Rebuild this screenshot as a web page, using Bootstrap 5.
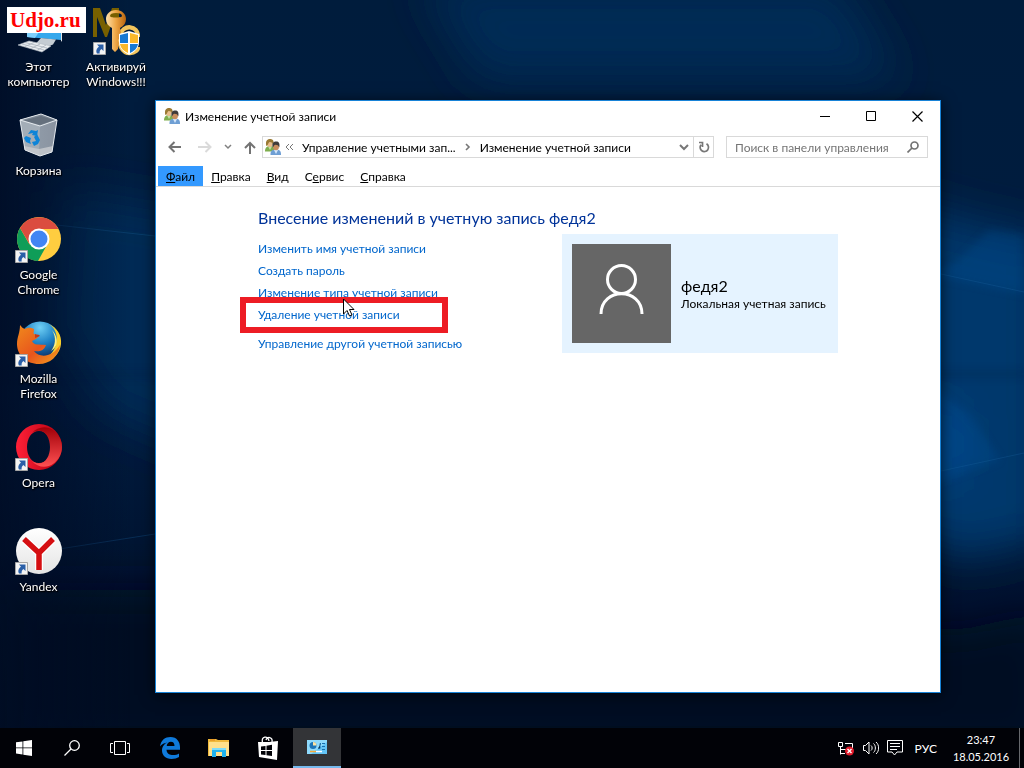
<!DOCTYPE html>
<html lang="ru">
<head>
<meta charset="utf-8">
<meta name="viewport" content="width=device-width, initial-scale=1">
<title>Изменение учетной записи</title>
<link href="https://cdn.jsdelivr.net/npm/bootstrap@5.3.0/dist/css/bootstrap.min.css" rel="stylesheet">
<style>
body{font-family:Lato,"Noto Sans",sans-serif;font-size:12px;line-height:15px;color:#000;background:#00122c}
button{font-size:12px;line-height:15px;padding:0;border:0;background:none;color:inherit}
svg{display:block;flex:none}
.desk{background:#001530}
.wallpaper{position:absolute;inset:0;width:100%;height:100%}
.shortcuts{position:relative;display:grid;grid-template-rows:repeat(6,104px);grid-template-columns:77px 78px;grid-auto-flow:column;width:155px;padding-top:8px}
.shortcuts a{color:#fff;text-decoration:none;text-align:center;text-shadow:0 1px 2px #000,1px 1px 1px #000}
.shortcuts svg{margin:0 auto 3px}
.shortcuts .newcol{grid-column:2;grid-row:1}
.brandmark{position:absolute;left:7px;top:7px;background:#fff;color:#f00;font:bold 21px/26px "Liberation Serif",serif;padding:0 5px 0 3px}
.win{position:absolute;left:155px;top:100px;right:83px;bottom:35px;background:#fff;border:1px solid #1883d7;box-shadow:0 2px 14px #000a}
.titlebar{height:30px;padding-left:8px;gap:5px}
.titlebar button{width:46px;height:30px;display:grid;place-items:center}
.navrow{height:35px;padding:5px 12px 8px 12px}
.navrow>button{height:22px;display:grid;place-items:center}
.box{border:1px solid #d9d9d9;height:22px}
.box a{color:#000;text-decoration:none;white-space:nowrap}
.box .refresh{border-left:1px solid #d9d9d9;width:20px;height:20px;display:grid;place-items:center}
.address{margin-left:6px;padding-left:2px}
.finder{width:202px;margin-left:12px}
.finder input{border:0;outline:0;background:none;width:100%;min-width:0;padding:0 0 0 8px;color:#333}
.finder input::placeholder{color:#757575;opacity:1}
.menus{border-bottom:1px solid #d9d9d9;height:21px;padding-left:2px}
.menus button{padding:0 8px;height:20px}
.menus .on{background:#3399ff}
.pane{padding:21px 102px 0}
.pane h1{font-size:16px;font-weight:400;line-height:20px;color:#003399;margin:0}
.pane li{line-height:16px;margin-bottom:6px;position:relative}
.pane li:last-child{margin-top:13px}
.pane li a{color:#0066cc;text-decoration:none}
.links{width:304px;padding-top:13px}
.ring{position:absolute;left:-18px;top:-10px;width:208px;height:36px;border:6px solid #ed1c24;pointer-events:none}
.pointer{position:absolute;left:84px;top:-9px}
.usercard{width:276px;background:#e5f3ff;padding:10px;margin-top:6px;gap:10px}
.usercard b{font-weight:400;font-size:16px;line-height:20px}
.taskbar{height:40px;background:#010207;color:#fff}
.taskbar button{width:48px;height:40px;display:grid;place-items:center}
.taskbar .apps{gap:1px;margin-left:2px}
.taskbar .active{background:#333437;border-bottom:2px solid #76b9ed}
.tray .clock{width:72px;font-size:11px;line-height:17px;margin-left:8px}
.tray .peek{width:5px;height:40px;border-left:1px solid #66686c;margin-left:2px}
.tray .lang,.tray .ic{width:auto}
</style>
</head>
<body>
<svg width="0" height="0" class="position-absolute" aria-hidden="true">
<defs>
<linearGradient id="op" x1="0" x2="1"><stop offset="0" stop-color="#ff2038"/><stop offset="1" stop-color="#b5000e"/></linearGradient>
<linearGradient id="op2" x1="0" y1="0" x2="0" y2="1"><stop offset="0" stop-color="#a10008"/><stop offset="1" stop-color="#ff5052"/></linearGradient>
<radialGradient id="ffb" cx=".5" cy=".15" r=".8"><stop offset="0" stop-color="#6fd0f5"/><stop offset=".5" stop-color="#1b7fc4"/><stop offset="1" stop-color="#0c2458"/></radialGradient>
<linearGradient id="ffo" x1="0" y1="0" x2="1" y2="1"><stop offset="0" stop-color="#f08a1c"/><stop offset=".55" stop-color="#e8551d"/><stop offset="1" stop-color="#f5a31d"/></linearGradient>
<linearGradient id="ya" x1="0" y1="0" x2="0" y2="1"><stop offset="0" stop-color="#fff"/><stop offset="1" stop-color="#e4e4e4"/></linearGradient>
<linearGradient id="bin" x1="0" x2="1"><stop offset="0" stop-color="#aab3bd"/><stop offset=".5" stop-color="#8f9aa7"/><stop offset="1" stop-color="#8a93a0"/></linearGradient>
<linearGradient id="key" x1="0" x2="1"><stop offset="0" stop-color="#ffe0a8"/><stop offset=".5" stop-color="#eda544"/><stop offset="1" stop-color="#b9640d"/></linearGradient>
<linearGradient id="sky" x1="0" y1="0" x2="0" y2="1"><stop offset="0" stop-color="#001c3c"/><stop offset=".55" stop-color="#001c40"/><stop offset="1" stop-color="#000c22"/></linearGradient>
<linearGradient id="edge" x1="0" x2="1"><stop offset="0" stop-color="#000c24" stop-opacity=".8"/><stop offset="1" stop-color="#000c24" stop-opacity="0"/></linearGradient>
<filter id="soft" x="-50%" y="-50%" width="200%" height="200%"><feGaussianBlur stdDeviation="22"/></filter>
<filter id="haze" x="-50%" y="-50%" width="200%" height="200%"><feGaussianBlur stdDeviation="4"/></filter>
<symbol id="arrow" viewBox="0 0 13 13"><path fill="#f4f4f4" stroke="#a5a5a5" d="M.5.5h12v12H.5z"/><path fill="#2a5fa8" d="M4 2.500h6.500V9L8.400 7C6.800 8.300 6.400 9.600 6.700 11.500H4C2.500 8.800 3.800 6.200 6 4.700z"/></symbol>
<symbol id="users" viewBox="0 0 16 16">
<path fill="#7fae4e" d="M0 12.500C0 8.500 2 7 5 7s5 1.500 5 5.500z"/><path fill="#c4dfa8" d="M3 7.500 5 11l2-3.500z"/><ellipse cx="4.800" cy="4.300" rx="2.900" ry="3.600" fill="#e9bd8c"/><path fill="#9a7a34" d="M1.300 7C.3 2 2 0 5 0s4.300 2 3.300 6C7.600 4 7 3 4.500 3 3 4 3 7 1.300 7z"/>
<path fill="#6f9fd4" d="M5.500 16c-.3-4 1.700-5.500 5.500-5.500s5.200 1.500 5 5.500z"/><path fill="#d6e8fa" d="M9 11 11 15l2-4z"/><ellipse cx="11" cy="7.500" rx="3" ry="3.800" fill="#c98d5e"/><path fill="#3f3c3b" d="M7.600 8.500C6.800 4 8.500 2.600 11.200 2.600S15 4.500 14.300 8.500C13.500 6.500 12.500 5.800 10.500 5.800 9 6 9 7.500 7.600 8.500z"/></symbol>
</defs></svg>

<div class="d-flex flex-column vh-100">
<main class="desk flex-grow-1 position-relative">
  <svg class="wallpaper" viewBox="0 0 1024 728" preserveAspectRatio="none" aria-hidden="true">
    <path fill="url(#sky)" d="M0 0h1024v728H0z"/>
    <g filter="url(#soft)"><path fill="#002a54" d="M420-20h420l60 100H480zM60 190l180 30v250l-140-60-50-80z"/><path fill="#00396c" d="m900 200 60 20 90 20v300l-90 20-60-30z"/><path fill="#00478a" d="m920 390 40 30v50l-40 20z"/><path fill="#000c22" d="M0 590h260l700 40 90-20v140H0z"/></g>
    <g filter="url(#haze)" fill="#005299" opacity=".3"><path d="M930 275 1024 294v-60l-35-4-30 30zM930 385l40 30 30 45-70 25z"/><path fill="#001a38" opacity=".8" d="M930 371h94v6h-94zM0 372h160v5H0z"/></g>
    <path stroke="#1a639f" stroke-opacity=".3" d="m30 222 125 14M941 274l83 18M941 471l83-18M40 552l115-18"/>
    <path fill="url(#edge)" d="M0 0h130v728H0z"/>
  </svg>
  <nav class="shortcuts" aria-label="Рабочий стол">
    <a href="#"><svg width="48" height="48" viewBox="0 0 48 48"><path fill="#35a8ec" d="M12 10 46 14v18L12 29z"/><path fill="#7fd0fb" d="m12 10 20 2-12 18-8-1z"/><path fill="#dfe4e8" d="m46 14 1 1v19l-1-1.500z"/><path fill="#c4ccd3" d="m26 30 15 1.500-3 5-5 2-13-2z"/><path fill="#e9edf0" stroke="#aeb7bf" stroke-width=".6" d="M14 33 36 38l-9 6-24-7z"/><path stroke="#a9b3bc" stroke-width=".8" d="m10 34.500 22 5.500M7 36l22 6M19 34.500l-9 4M25 36l-9 4.500M31 37l-9 5.500"/></svg>Этот<br>компьютер</a>
    <a href="#"><svg width="48" height="48" viewBox="0 0 48 48"><path fill="url(#bin)" d="M5 8 26 2l16 6-5 32-12 4-15-6z"/><path fill="#7b8693" d="M5 8 26 2l16 6-17 6z"/><path fill="#65707d" d="M9 8.500 26 4l13 4-14 5z"/><path fill="#a3adb7" d="M5 8l20 6-1 29-14-6z"/><path fill="#c9cccf" d="m9 34 15 3 14-3-1 6-12 4-15-6z" opacity=".8"/><path fill="none" stroke="#e4e9ed" d="M5 8 26 2l16 6-17 6zM5 8l5 30 15 6 12-4 5-32"/><g fill="#0d84d8"><path d="m13 22 3-4 5 1 2-1-1 6-5-1 1-2z"/><path d="m11 24 5 2-1 3 1 3-5-2-2-4z"/><path d="m22 22 3 6-2 4-4 2-2-4 4-1-2-4z"/></g></svg>Корзина</a>
    <a href="#"><svg width="48" height="48" viewBox="0 0 48 48"><circle cx="24" cy="23" r="22" fill="#ffcd40"/><path fill="#0f9d58" d="M5 12A22 22 0 0 0 23 45l9.500-17L24 23 14.500 28.500z"/><path fill="#db4c3f" d="M5 12A22 22 0 0 1 43.500 13H24l-9.500 15z"/><circle cx="24" cy="23" r="10.500" fill="#fff"/><circle cx="24" cy="23" r="8.500" fill="#4285f4"/><use href="#arrow" x="0" y="34" width="13" height="13"/></svg>Google<br>Chrome</a>
    <a href="#"><svg width="48" height="48" viewBox="0 0 48 48"><circle cx="25" cy="22" r="20.500" fill="url(#ffb)"/><path fill="#f8cf2c" d="M34 4c7 5 9 12 7 20-2 9-8 14-16 15 10 4 20-4 21-15C47 15 42 8 34 4z"/><path fill="#fff080" d="M37 10c5 8 3 16-1 21 6-3 9-12 1-21z"/><path fill="url(#ffo)" d="M5 5c2 2 2 3 5 4 4-2 6-1 9 0 0 3-1 4 0 5l5 2-3 3-4 2c2 5 7 3 14 4-2 6-7 7-12 6 5 7 18 7 26-6-1 11-10 19-21 19C11 44 2 35 2 24 2 17 5 13 5 5z"/><path fill="#c03a1d" d="M20 14c2 1 4 0 5 2l-5 2z"/><use href="#arrow" x="0" y="34" width="13" height="13"/></svg>Mozilla<br>Firefox</a>
    <a href="#"><svg width="48" height="48" viewBox="0 0 48 48"><path fill="url(#op)" fill-rule="evenodd" d="M24 0a23 23 0 1 1 0 46 23 23 0 0 1 0-46zm0 7C16 7 12 15 12 23s4 16 12 16 12-8 12-16S32 7 24 7z"/><path fill="url(#op2)" d="M17 9C21 4 28 2 34 4c8 3 13 11 13 19s-5 16-13 19c-6 2-13 0-17-5 11 7 18-3 18-14S28 2 17 9z"/><use href="#arrow" x="0" y="34" width="13" height="13"/></svg>Opera</a>
    <a href="#"><svg width="48" height="48" viewBox="0 0 48 48"><circle cx="24" cy="23" r="23" fill="url(#ya)"/><path fill="none" stroke="#fff" stroke-width="8" d="M9 11 24 25 38 11M24 24v18"/><path fill="none" stroke="#d50f12" stroke-width="5.500" d="M9 11 24 25 38 11M24 24v18"/><use href="#arrow" x="0" y="34" width="13" height="13"/></svg>Yandex</a>
    <a href="#" class="newcol"><svg width="48" height="48" viewBox="0 0 48 48"><path fill="#786000" d="M1 29V0h7l6 17L20 0h7v29h-5V9l-7 20h-2L5 9v20z"/><path fill="none" stroke="#f3c55c" stroke-width="4.500" d="M46 29c0-12-15-13-18-2-2 9 2 18 10 18 5 0 8-3 8-6"/><path fill="url(#key)" fill-rule="evenodd" d="M24 2c6 0 10 4 10 9 0 4-2 7-6 9l1 5-2 2 1 3-2 2 1 3-1 6-3 3-3-3V20c-4-2-6-5-6-9 0-5 4-9 10-9zm0 3c-4 0-6 1-6 3s12 2 12 0-2-3-6-3z"/><path fill="#fff" d="m37 23 10 3v8c0 7-5 10-10 13-5-3-10-6-10-13v-8z"/><path fill="#1678d2" d="M36 25v10h-8v-8zM38 36h8c-1 5-4 7-8 9z"/><path fill="#fbb829" d="M38 25v10h8v-8zM36 36h-8c1 5 4 7 8 9z"/><use href="#arrow" x="1" y="34" width="13" height="13"/></svg>Активируй<br>Windows!!!</a>
  </nav>
  <div class="brandmark">Udjo.ru</div>

  <section class="win d-flex flex-column">
    <header class="titlebar d-flex align-items-center">
      <svg width="16" height="16"><use href="#users"/></svg>
      <span class="me-auto">Изменение учетной записи</span>
      <div class="d-flex">
      <button type="button" aria-label="Свернуть"><svg width="11" height="11"><path stroke="#000" d="M0 5.500h10"/></svg></button>
      <button type="button" aria-label="Развернуть"><svg width="11" height="11"><path fill="none" stroke="#000" d="M.5.5h9v9h-9z"/></svg></button>
      <button type="button" aria-label="Закрыть"><svg width="11" height="11"><path stroke="#000" stroke-width="1.200" d="m.5.5 10 10m0-10-10 10"/></svg></button>
      </div>
    </header>
    <div class="navrow d-flex align-items-center">
      <button type="button" aria-label="Назад"><svg width="14" height="12" fill="none" stroke="#737373" stroke-width="2"><path d="M13 6H2M6.500 1 1.500 6l5 5"/></svg></button>
      <button type="button" class="ms-3" aria-label="Вперед"><svg width="14" height="12" fill="none" stroke="#dadada" stroke-width="2"><path d="M0 6h11M7.500 1l5 5-5 5"/></svg></button>
      <button type="button" class="ms-2 px-1" aria-label="Журнал"><svg width="8" height="6" fill="none" stroke="#808080" stroke-width="1.500"><path d="m1 1 3 3 3-3"/></svg></button>
      <button type="button" class="ms-1 ps-1" aria-label="Вверх"><svg width="12" height="13" fill="none" stroke="#737373" stroke-width="2"><path d="M6 13V2M1 7l5-5 5 5"/></svg></button>
      <div class="box address flex-grow-1 d-flex align-items-center">
        <svg width="16" height="16"><use href="#users"/></svg>
        <svg class="ms-1 me-2" width="9" height="8" fill="none" stroke="#777"><path d="M4 1 1 4l3 3M8 1 5 4l3 3"/></svg>
        <a href="#">Управление учетными зап...</a>
        <svg class="mx-2" width="8" height="8" fill="none" stroke="#777" stroke-width="1.600"><path d="m2 1 3 3-3 3"/></svg>
        <a href="#" class="me-auto">Изменение учетной записи</a>
        <button type="button" class="px-1" aria-label="Предыдущие расположения"><svg width="10" height="7" fill="none" stroke="#777" stroke-width="2"><path d="m1 1 4 4 4-4"/></svg></button>
        <button type="button" class="refresh" aria-label="Обновить"><svg width="12" height="12" fill="none" stroke="#777" stroke-width="1.700"><path d="M8.500 2.800A4.200 4.200 0 1 1 3 3.800M4.500 6V1.500H1"/></svg></button>
      </div>
      <div class="box finder d-flex align-items-center">
        <input type="search" aria-label="Поиск" placeholder="Поиск в панели управления">
        <svg class="me-2" width="12" height="12" fill="none" stroke="#737373" stroke-width="1.700"><circle cx="7.500" cy="4.500" r="3.500"/><path d="M5 7 .5 11.500"/></svg>
      </div>
    </div>
    <div class="menus d-flex">
      <button type="button" class="on"><u>Ф</u>айл</button>
      <button type="button"><u>П</u>равка</button>
      <button type="button"><u>В</u>ид</button>
      <button type="button">С<u>е</u>рвис</button>
      <button type="button"><u>С</u>правка</button>
    </div>
    <div class="pane flex-grow-1">
      <h1>Внесение изменений в учетную запись федя2</h1>
      <div class="d-flex align-items-start">
        <ul class="links list-unstyled mb-0">
          <li><a href="#">Изменить имя учетной записи</a></li>
          <li><a href="#">Создать пароль</a></li>
          <li><a href="#">Изменение типа учетной записи</a></li>
          <li><a href="#">Удаление учетной записи</a>
            <span class="ring"></span>
            <svg class="pointer" width="14" height="20"><path fill="#fff" stroke="#000" d="M1.500 1v15l3.500-3.500 2.500 5.500 2.500-1-2.500-5.500H12z"/></svg></li>
          <li><a href="#">Управление другой учетной записью</a></li>
        </ul>
        <div class="usercard d-flex align-items-center">
          <svg width="99" height="99" fill="none" stroke="#fff" stroke-width="3"><path fill="#666" stroke="none" d="M0 0h99v99H0z"/><circle cx="49.500" cy="35.500" r="14"/><path d="M29 70c0-27 41-27 41 0"/></svg>
          <div class="text-nowrap"><b class="d-block">федя2</b>Локальная учетная запись</div>
        </div>
      </div>
    </div>
  </section>
</main>

<footer class="taskbar d-flex align-items-center">
  <button type="button" aria-label="Пуск"><svg width="16" height="16" fill="#fff"><path d="m0 2.300 6.500-.9v6.100H0zM7.300 1.300 16 0v7.500H7.300zM0 8.300h6.500v6.200L0 13.600zM7.300 8.300H16V16l-8.700-1.300z"/></svg></button>
  <button type="button" aria-label="Поиск в Windows"><svg width="16" height="16" fill="none" stroke="#fff" stroke-width="1.300"><circle cx="10.500" cy="5.500" r="4.800"/><path d="M7 9 .5 15.500"/></svg></button>
  <button type="button" aria-label="Представление задач"><svg width="20" height="14" fill="none" stroke="#fff"><path d="M4.500.5h11v13h-11zM3 2.500H.5v9H3M17 2.500h2.500v9H17"/></svg></button>
  <div class="apps d-flex">
    <button type="button" aria-label="Edge"><svg width="20" height="22" fill="#0f7adb"><path d="M0 9.500C1 3 5 0 10.500 0 17 0 20 5 20 10v2.700H6.500c.2 4 3.500 5.300 6.500 5.300 2.500 0 4.500-.7 6-1.600V20c-2 1.200-4.500 2-7.500 2C5.500 22 2 18 2 13.500 2 9.500 4.500 6.500 7.500 5.500 4.500 5.800 1.500 7.500 0 9.500zM6.700 9h7.800c0-2.700-1.300-4.200-3.600-4.200S7 6.500 6.700 9z"/></svg></button>
    <button type="button" aria-label="Проводник"><svg width="22" height="20"><path fill="#f0b93c" d="M0 1h8l2 1h11v16H0z"/><path fill="#ffe08c" d="M1 4h20v14H1z"/><path fill="#ea9d28" d="M2 1h5v2H2z"/><path fill="#1fb3ee" d="M4 10h14v9h-4v-5H8v5H4z"/><path fill="#7fdcf9" d="M4 10h14v2H4z"/></svg></button>
    <button type="button" aria-label="Магазин"><svg width="22" height="24"><path fill="none" stroke="#fff" stroke-width="1.300" d="M5.500 7C4 0 11-1 12 5M9 4c1-4 7-3 6 2"/><path fill="#fff" d="M1 6h11l9-1-1 19-18-3z"/><path fill="#010207" d="m4 10.500 4.500-.6v4H4zM9.500 9.700l5.500-.9v5.100H9.500zM4 15h4.500v4L4 18.500zM9.500 15H15v5l-5.500-.8z"/></svg></button>
    <button type="button" class="active" aria-label="Панель управления"><svg width="20" height="14"><path fill="#64c4f5" d="M0 0h20v14H0z"/><path fill="#8fdafc" d="M0 0h20v2L4 14H0z"/><circle cx="6" cy="5.500" r="3.500" fill="#1c75b8"/><path fill="#ffe3a0" d="M6 5.500V2a3.500 3.500 0 0 1 3.500 3.500z"/><path stroke="#176fae" d="M11 8.500h2v-5h1M15 3.500h3M15 6.500h3M15 9.500h3"/><path stroke="#f6a936" stroke-width="1.500" d="M3 11.500h6"/><path stroke="#fff" stroke-width="1.500" d="M9 11.500h6"/></svg></button>
  </div>
  <div class="tray d-flex align-items-center ms-auto text-center">
    <button type="button" class="ic" aria-label="Сеть"><svg width="17" height="15" fill="none" stroke="#fff"><path d="M.5 1.500h4v4h-4zM2.500 5.500v8M2 8.500h6M7 2.500h7.500v6M2 12.500h5"/><circle cx="11.500" cy="10" r="4.500" fill="#e11b2b" stroke="none"/><path stroke-width="1.400" d="m9.500 8 4 4m0-4-4 4"/></svg></button>
    <button type="button" class="ic ms-2" aria-label="Громкость"><svg width="16" height="14" fill="none" stroke="#fff"><path d="M.5 4.500h2L6 1v12L2.500 9.500h-2zM8 4.500c1.500 1 1.500 4 0 5M10.500 2.500c2.500 2 2.500 7 0 9M13 1c3.500 3 3.500 9 0 12"/></svg></button>
    <button type="button" class="ic ms-2" aria-label="Уведомления"><svg width="16" height="16" fill="none" stroke="#fff"><path d="M.5.5h15v11.500H10L7.500 15 5 12H.5zM3 3.500h10M3 6.500h10M3 9.500h7"/></svg></button>
    <button type="button" class="lang ms-2 ps-1">РУС</button>
    <div class="clock">23:47<br>18.05.2016</div>
    <div class="peek"></div>
  </div>
</footer>
</div>
<script src="https://cdn.jsdelivr.net/npm/bootstrap@5.3.0/dist/js/bootstrap.bundle.min.js"></script>
</body>
</html>
